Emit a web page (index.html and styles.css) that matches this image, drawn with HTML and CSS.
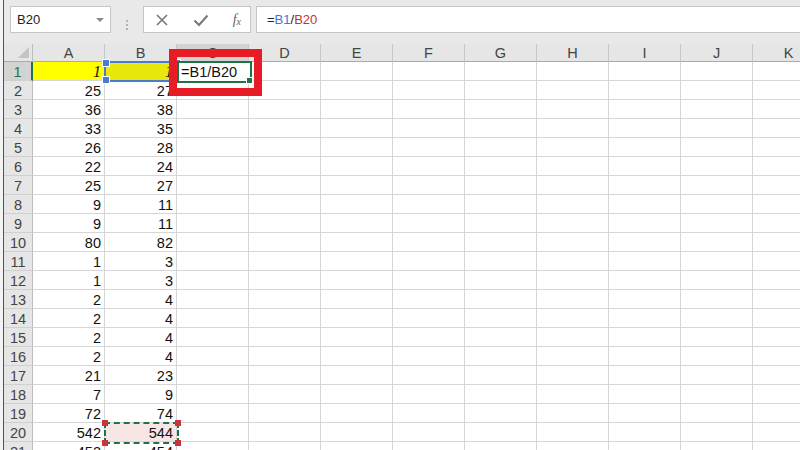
FILE: index.html
```html
<!DOCTYPE html>
<html lang="en">
<head>
    <meta charset="UTF-8">
    <title>Sheet1</title>
    <link rel="stylesheet" href="styles.css">
</head>
<body>
    <div class="app">
        <!-- formula bar -->
        <div class="toolbar">
            <div class="namebox">B20<span class="arrow"></span></div>
            <div class="grip"><i></i><i></i><i></i></div>
            <div class="fxbox">
                <svg width="14" height="14" viewBox="0 0 14 14"><path d="M2 2 L12 12 M12 2 L2 12" stroke="#777" stroke-width="1.6" fill="none"/></svg>
                <svg width="16" height="14" viewBox="0 0 16 14"><path d="M1.5 7.5 L6 12 L14.5 2.5" stroke="#777" stroke-width="2" fill="none"/></svg>
                <span class="fx">f<sub>x</sub></span>
            </div>
            <div class="formula">=<span class="ref-blue">B1</span>/<span class="ref-red">B20</span></div>
        </div>

        <!-- grid -->
        <div class="sheet" id="sheet">
            <div class="ref-box"><b class="h tl"></b><b class="h tr"></b><b class="h bl"></b><b class="h br"></b></div>
            <div class="editor">=B1/B20<b class="fill-handle"></b></div>
            <div class="copy-box"><b class="h tl"></b><b class="h tr"></b><b class="h bl"></b><b class="h br"></b></div>
            <div class="callout"></div>
        </div>
    </div>

    <script>
        const colA = [1, 25, 36, 33, 26, 22, 25, 9, 9, 80, 1, 1, 2, 2, 2, 2, 21, 7, 72, 542, 452];
        const colB = [1, 27, 38, 35, 28, 24, 27, 11, 11, 82, 3, 3, 4, 4, 4, 4, 23, 9, 74, 544, 454];
        const letters = ["A", "B", "C", "D", "E", "F", "G", "H", "I", "J", "K"];
        const sheet = document.getElementById("sheet");

        let html = '<div class="row head"><div class="rh corner"><span class="tri"></span></div>';
        letters.forEach(l => {
            html += `<div class="cell ${l === "C" ? "active-col" : ""}">${l}</div>`;
        });
        html += '</div>';

        for (let r = 0; r < colA.length; r++) {
            const first = r === 0;
            html += `<div class="row${first ? " first" : ""}">`;
            html += `<div class="rh${first ? " active-row" : ""}">${r + 1}</div>`;
            html += `<div class="cell${first ? " yellow" : ""}">${colA[r]}</div>`;
            html += `<div class="cell${first ? " yellow-dim" : ""}${r === 19 ? " copied" : ""}">${colB[r]}</div>`;
            for (let c = 2; c < letters.length; c++) html += '<div class="cell"></div>';
            html += '</div>';
        }
        sheet.insertAdjacentHTML("afterbegin", html);
    </script>
</body>
</html>
```

FILE: styles.css
```css
body {
    margin: 0;
    background: #f3f3f3;
    font-family: "Liberation Sans", Arial, sans-serif;
    overflow: hidden;
}
.app {
    margin-left: 3px;
    border-left: 1px solid #217346;
    height: 450px;
    background: #e9e9e9;
    overflow: hidden;
}

/* formula bar */
.toolbar {
    display: flex;
    height: 44px;
    padding: 6px 0 0 6px;
    box-sizing: border-box;
}
.namebox, .fxbox, .formula {
    height: 27px;
    background: #fff;
    border: 1px solid #c6c6c6;
    box-sizing: border-box;
    display: flex;
    align-items: center;
}
.namebox {
    width: 101px;
    padding-left: 6px;
    font-size: 13px;
    color: #222;
    position: relative;
}
.arrow {
    position: absolute;
    right: 6px;
    top: 11px;
    border-left: 4px solid transparent;
    border-right: 4px solid transparent;
    border-top: 4px solid #888;
}
.grip {
    width: 32px;
    display: flex;
    flex-direction: column;
    align-items: center;
    justify-content: center;
    gap: 2px;
}
.grip i {
    width: 2px;
    height: 2px;
    background: #b4b4b4;
}
.fxbox {
    width: 108px;
    justify-content: space-between;
    padding: 0 9px 0 11px;
}
.fx {
    font-family: "Liberation Serif", serif;
    font-style: italic;
    font-size: 14px;
    color: #666;
}
.fx sub {
    font-size: 10px;
    vertical-align: -1px;
}
.formula {
    flex: 1;
    margin-left: 5px;
    padding-left: 10px;
    font-size: 13px;
    color: #222;
    border-right: none;
}
.ref-blue {
    color: #3c78d8;
}
.ref-red {
    color: #c0392b;
}

/* grid */
.sheet {
    position: relative;
    background: #fff;
    height: 406px;
}
.row {
    display: flex;
    height: 19px;
}
.cell {
    width: 72px;
    flex: none;
    box-sizing: border-box;
    border-right: 1px solid #d6d6d6;
    border-bottom: 1px solid #d6d6d6;
    text-align: right;
    padding-right: 3px;
    font-size: 14.5px;
    line-height: 20px;
    color: #111;
    overflow: hidden;
}
.rh {
    width: 29px;
    flex: none;
    box-sizing: border-box;
    background: #e6e6e6;
    border-right: 1px solid #bdbdbd;
    border-bottom: 1px solid #d0d0d0;
    text-align: center;
    font-size: 14.5px;
    line-height: 20px;
    color: #444;
}
.head {
    height: 18px;
    background: #e6e6e6;
}
.head .cell {
    text-align: center;
    padding: 0;
    color: #444;
    line-height: 18px;
    border-right-color: #c6c6c6;
    border-bottom-color: #ababab;
}
.head .rh {
    border-bottom-color: #ababab;
}
.corner {
    position: relative;
}
.tri {
    position: absolute;
    right: 3px;
    bottom: 3px;
    border-left: 11px solid transparent;
    border-bottom: 11px solid #c4c4c4;
}
.active-col {
    background: #d3d3d3;
}
.active-row {
    background: #d3d3d3;
    color: #217346;
    border-right: 2px solid #217346;
}
.first .cell {
    font-family: "Liberation Serif", serif;
    font-style: italic;
    font-size: 16px;
}
.yellow {
    background: #ffff00;
}
.yellow-dim {
    background: #e8e80c;
}
.copied {
    background: #f8e6e6;
}

/* overlays on the grid */
.ref-box {
    position: absolute;
    left: 100px;
    top: 17px;
    width: 75px;
    height: 21px;
    border: 2px solid #4a7bd0;
    box-sizing: border-box;
}
.copy-box {
    position: absolute;
    left: 100px;
    top: 378px;
    width: 75px;
    height: 22px;
    border: 2px dashed #217346;
    box-sizing: border-box;
}
.h {
    position: absolute;
    width: 6px;
    height: 6px;
    background: #4a7bd0;
    border: 1px solid #fff;
}
.copy-box .h {
    background: #c8353d;
    border: none;
    width: 6px;
    height: 6px;
}
.tl { left: -4px; top: -4px; }
.tr { right: -4px; top: -4px; }
.bl { left: -4px; bottom: -4px; }
.br { right: -4px; bottom: -4px; }
.editor {
    position: absolute;
    left: 173px;
    top: 17px;
    width: 75px;
    height: 22px;
    box-sizing: border-box;
    border: 2px solid #217346;
    background: #fff;
    font-size: 14.5px;
    line-height: 18px;
    padding-left: 2px;
    color: #111;
}
.fill-handle {
    position: absolute;
    right: -3px;
    bottom: -3px;
    width: 5px;
    height: 5px;
    background: #217346;
    border: 1px solid #fff;
}
.callout {
    position: absolute;
    left: 165px;
    top: 5px;
    width: 93px;
    height: 47px;
    border: 8px solid #e81c24;
    box-sizing: border-box;
}
```
